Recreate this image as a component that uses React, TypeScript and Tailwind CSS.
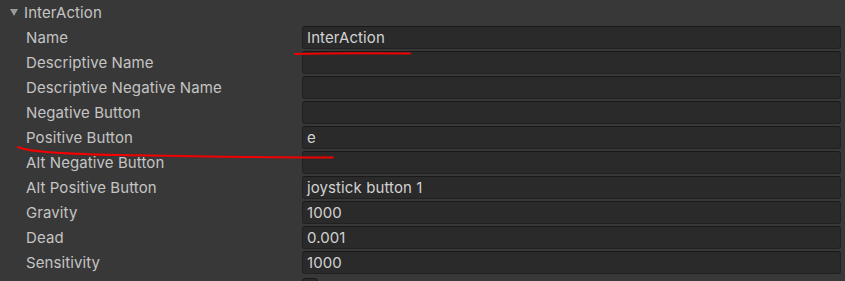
const rows: { label: string; value: string }[] = [
  { label: 'Name', value: 'InterAction' },
  { label: 'Descriptive Name', value: '' },
  { label: 'Descriptive Negative Name', value: '' },
  { label: 'Negative Button', value: '' },
  { label: 'Positive Button', value: 'e' },
  { label: 'Alt Negative Button', value: '' },
  { label: 'Alt Positive Button', value: 'joystick button 1' },
  { label: 'Gravity', value: '1000' },
  { label: 'Dead', value: '0.001' },
  { label: 'Sensitivity', value: '1000' },
];

export default function App() {
  return (
    <div className="relative w-[845px] h-[281px] overflow-hidden bg-[#383838] text-[15px] tracking-[0.1px] text-[#c4c4c4] font-['Inter','Liberation_Sans',sans-serif]">
      {/* Foldout header */}
      <div className="flex items-center h-[25px] pl-[10px] gap-[6px]">
        <svg width="8" height="7" viewBox="0 0 8 7">
          <path d="M0 0 H8 L4 7 Z" fill="#9a9a9a" />
        </svg>
        <span className="pt-[2px]">InterAction</span>
      </div>

      {rows.map((row) => (
        <div key={row.label} className="flex items-center h-[25px]">
          <div className="w-[302px] shrink-0 pl-[26px] pt-[2px]">{row.label}</div>
          <div className="w-[539px] h-[23px] rounded-[3px] bg-[#2a2a2a] border border-[#212121] border-t-[#191919] flex items-center px-[4px] pt-[2px] text-[#d2d2d2]">
            {row.value}
          </div>
        </div>
      ))}

      {/* Snap toggle, cut off at the bottom */}
      <div className="flex h-[25px] pt-[3px]">
        <div className="w-[302px] shrink-0" />
        <div className="w-[16px] h-[16px] rounded-[3px] bg-[#2a2a2a] border border-[#191919]" />
      </div>

      {/* red annotation strokes */}
      <svg className="absolute inset-0 pointer-events-none" width="845" height="281">
        <path d="M295 54 C330 53, 370 53, 410 53.5" stroke="#f00000" strokeWidth="2" fill="none" strokeLinecap="round" />
        <path d="M18 147 C28 152, 60 154, 120 155 S280 158, 333 157.5" stroke="#f00000" strokeWidth="2" fill="none" strokeLinecap="round" />
      </svg>
    </div>
  );
}
